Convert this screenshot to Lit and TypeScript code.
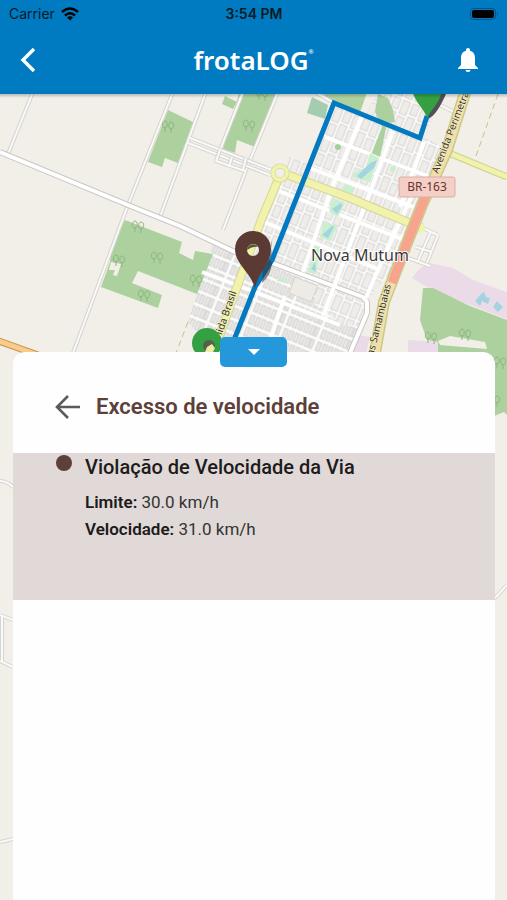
import { LitElement, html, svg, css } from "lit";
import { customElement } from "lit/decorators.js";

const woods = [
  "168,110 195,123 178,163 165,158 162,167 148,162",
  "240,90 279,90 255,147 237,140 235,153 223,149",
  "225,96 237,102 233,109 222,104",
  "125,220 182,242 179,253 193,260 195,251 213,254 197,294 138,271 132,283 162,295 158,308 101,287 110,262 111,247",
  "322,90 368,90 360,112 334,101 326,98",
  "378,94 388,98 393,110 395,122 387,123 380,157 372,153 382,127 375,112",
  "423,288 433,288 470,306 507,320 507,415 504,412 494,416 480,400 438,352 438,342 427,340 420,320",
];
const parks = [
  "370,153 379,158 370,182 352,177 354,173 366,167",
  "346,184 355,188 348,197 340,194",
  "333,198 345,203 338,217 329,212",
  "323,222 338,226 330,241 320,238",
  "315,245 320,247 316,274 308,272",
];
const estates = [
  "430,263 453,268 473,280 507,292 507,319 470,305 427,287 412,278 420,268",
  "408,340 439,342 439,353 408,353",
  "355,335 370,337 366,353 350,353",
];
const lanes = [
  "M33,92 L8,154",
  "M173,92 L128,205 L112,248 L73,353",
  "M206,92 L160,217",
  "M243,92 L220,150",
  "M278,92 L250,160 L223,230",
  "M190,138 L272,170",
  "M188,143 L270,175",
  "M220,150 L216,161 L245,171 M232,157 L229,167 M246,158 L243,170",
  "M423,228 L438,235 M416,247 L432,252 M408,258 L430,266 M431,231 L418,261 M438,235 L427,263",
  "M432,101 L456,113",
  "M308,88 L334,103",
  "M0,481 Q7,481 13,487",
  "M0,615 L13,620 M2,616 L2,661 M0,661 L13,667",
  "M0,842 L13,839",
  "M494,599 L507,585",
];
const mainRoad = "M0,152 L128,205 L180,226 L237,253 L272,263 L363,297 L367,302 L367,313 L350,353";
const avenues = [
  "M325,137 L370,154",
  "M380,158 L430,177",
  "M310,168 L413,207",
  "M279,191 L407,241",
  "M264,222 L380,270",
  "M202,272 L250,290 L340,325",
  "M362,116 L332,187 L303,272",
  "M393,131 L367,200 L323,316",
  "M413,193 L373,281 L366,298",
  "M424,142 L400,207",
  "M285,296 L270,340",
];
const trees: [number, number][] = [
  [168, 126], [249, 125], [262, 94], [157, 257], [119, 260], [144, 295], [138, 226], [196, 280],
  [431, 337], [465, 334], [500, 362], [494, 400],
];

@customElement("city-map")
class CityMap extends LitElement {
  static styles = css`
    :host { display: block; overflow: hidden; background: #f2efe9; }
    .map { display: block; width: 100%; height: 100%; }
    .wood { fill: #add19e; }
    .park { fill: #c8f0cf; }
    .water { fill: #a5d3e2; }
    .estate { fill: #ebdbe8; }
    .line { fill: none; stroke-linejoin: round; }
    .edge { stroke: #d6d4d1; stroke-width: 4; }
    .core { stroke: #fafaf9; stroke-width: 2; }
    .wide-edge { stroke: #cbc8c6; stroke-width: 6; }
    .wide-core { stroke: #ffffff; stroke-width: 4; }
    .yellow-edge { stroke: #d6d69a; stroke-width: 9; }
    .yellow-core { stroke: #f1f2ab; stroke-width: 7; }
    .slim-edge { stroke: #cfcf8c; stroke-width: 7; }
    .slim-core { stroke: #f1f2ab; stroke-width: 5; }
    .olive-edge { stroke: #c9c988; stroke-width: 12; }
    .sand-core { stroke: #f4dda8; stroke-width: 9; }
    .red-core { stroke: #f6a48e; stroke-width: 9; }
    .orange-edge { stroke: #c9974d; stroke-width: 7; }
    .orange-core { stroke: #fbcb8c; stroke-width: 5; }
    .track { stroke: #cbbf8b; stroke-width: 1; stroke-dasharray: 6 4; }
    .tree { fill: none; stroke: #8db581; stroke-width: 1; }
    .route { fill: none; stroke: #0379bf; stroke-width: 5; }
    .street { font: 10px "Noto Sans", sans-serif; fill: #333; stroke: #f4f0c0; stroke-width: 1; paint-order: stroke; }
    .city { font: 16px "Noto Sans", sans-serif; fill: #3a3a3a; stroke: #fff; stroke-width: 2; paint-order: stroke; text-anchor: middle; }
    .shield { fill: #f3cfc5; stroke: #dcaea2; }
    .ref { font: 12px "Noto Sans", sans-serif; fill: #6b3430; text-anchor: middle; }
  `;

  both(d: string, edge: string, core: string) {
    return svg`<path class="line ${edge}" d=${d} /><path class="line ${core}" d=${d} />`;
  }

  render() {
    return html`
      <svg class="map" viewBox="0 94 507 806" preserveAspectRatio="xMidYMin slice" role="img" aria-label="Mapa de Nova Mutum">
        <defs>
          <pattern id="blocks" width="20" height="32" patternUnits="userSpaceOnUse" patternTransform="translate(336 106) rotate(22)">
            <rect width="20" height="32" fill="#fbfbfa" />
            <g fill="#efedea" stroke="#cfcdcb" stroke-width="0.8">
              <rect x="1" y="1" width="7" height="14" /><rect x="11" y="1" width="7" height="11" />
              <rect x="1" y="18" width="7" height="12" /><rect x="11" y="15" width="7" height="15" />
            </g>
          </pattern>
          <pattern id="lots" width="36" height="13" patternUnits="userSpaceOnUse" patternTransform="translate(270 264) rotate(22)">
            <rect width="36" height="13" fill="#fbfbfa" />
            <g fill="#e9e7e5" stroke="#cbc9c7" stroke-width="0.8">
              <rect x="2" y="2" width="4" height="9" /><rect x="8" y="2" width="4" height="9" />
              <rect x="14" y="2" width="4" height="9" /><rect x="20" y="2" width="4" height="9" />
              <rect x="26" y="2" width="4" height="9" /><rect x="31" y="2" width="3" height="9" />
            </g>
          </pattern>
          <linearGradient id="shade" x1="0" y1="0" x2="0" y2="1">
            <stop offset="0" stop-color="#000" stop-opacity="0.22" />
            <stop offset="1" stop-color="#000" stop-opacity="0" />
          </linearGradient>
        </defs>
        <rect y="94" width="507" height="806" fill="#f2efe9" />
        ${estates.map((p) => svg`<polygon class="estate" points=${p} />`)}
        <polygon fill="url(#blocks)" points="334,103 366,115 376,94 437,94 432,118 426,138 441,146 422,205 392,272 380,284 367,302 367,313 352,348 320,318 272,263 250,255 268,215 283,175 289,156 314,166" />
        <polygon fill="url(#lots)" points="213,243 250,258 272,263 318,282 314,305 345,326 362,325 350,353 215,353 188,322" />
        ${woods.map((p) => svg`<polygon class="wood" points=${p} />`)}
        <polygon points="312,97 328,105 325,119 307,113" fill="#a4cdb0" />
        <polygon points="438,341 450,336 485,342 487,349 440,345" fill="#f2efe9" />
        <path d="M111,262 L121,264 L117,276 L113,275 L115,270 L109,270 Z" fill="#f2efe9" />
        <circle cx="338" cy="147" r="3" fill="#a3cf9b" />
        <circle cx="393" cy="169" r="3" fill="#c8f0cf" />
        ${lanes.map((d) => this.both(d, "edge", "core"))}
        ${this.both(mainRoad, "wide-edge", "wide-core")}
        ${avenues.map((d) => svg`<path class="line wide-core" d=${d} />`)}
        ${parks.map((p) => svg`<polygon class="park" points=${p} />`)}
        <path class="water" d="M377,160 L370,163 L357,176 L361,179 L374,168 Z M341,203 L332,209 L337,214 L342,206 Z M332,226 L322,235 L328,238 L334,227 Z M315,262 L311,269 L316,272 Z" />
        <path class="water" d="M475,301 L481,294 L484,292 L486,297 L490,298 L488,304 L482,301 L480,306 Z M493,307 L497,301 L503,307 L498,312 Z" />
        <polygon points="295,277 318,286 311,302 289,293" fill="#eeebe7" stroke="#d7d3cf" />
        <polygon points="279,277 287,279 285,283 277,281" fill="#c9ecd3" />
        <path class="line track" d="M498,94 L476,156" />
        <path class="line track" d="M188,322 L176,353" />
        ${this.both("M288,175 L350,198 L383,212 L422,228", "yellow-edge", "yellow-core")}
        ${this.both("M278,180 L262,218 L236,290 L213,353", "yellow-edge", "yellow-core")}
        ${this.both("M444,151 L507,177", "slim-edge", "slim-core")}
        <circle cx="280" cy="173" r="7" fill="#f2efe9" stroke="#cfcf8c" stroke-width="5" />
        <circle cx="280" cy="173" r="7" fill="none" stroke="#f1f2ab" stroke-width="4" />
        <circle cx="420" cy="228" r="5" fill="#f1f2ab" />
        ${this.both("M466,90 L447,150 L422,205 L405,248 L384,302 L375,353", "olive-edge", "sand-core")}
        <path class="line red-core" d="M433,178 L422,205 L405,248 L392,283" />
        ${this.both("M-4,340 L38,355", "orange-edge", "orange-core")}
        ${trees.map(
          ([x, y]) => svg`<path class="tree" transform="translate(${x} ${y})"
            d="M-3,6 V1 M-3,2 C-7,2 -6,-5 -3,-5 C0,-5 0,2 -3,2 M3,7 V2 M3,3 C0,3 0,-4 3,-4 C7,-4 6,3 3,3" />`
        )}
        <text class="street" transform="translate(438 174) rotate(-69)">Avenida Perimetra</text>
        <text class="street" transform="translate(215 355) rotate(-71)">Avenida Brasil</text>
        <text class="street" text-anchor="end" transform="translate(391 285) rotate(-76)">Avenida das Samambaias</text>
        <text class="city" x="360" y="261">Nova Mutum</text>
        <rect class="shield" x="399" y="177" width="56" height="20" rx="2" />
        <text class="ref" x="427" y="191">BR-163</text>

        <path d="M271,240 Q275,254 256,286 L264,275 L272,263 Z" fill="#34393f" opacity="0.6" />
        <path d="M427,119 Q436,117 446,94 L434,94 Z" fill="#4e5257" />
        <path class="route" d="M427,116 L420,138 L334,103 L272,260 L255,287 L232,345" />
        <path d="M262,283 Q271,275 272,263 L264,252 Z" fill="#34393f" opacity="0.6" />
        <path d="M427,118 C424,108 415,103 412,90 H442 C440,103 432,108 427,118 Z" fill="#35a042" />
        <path fill="#5b3a34" fill-rule="evenodd"
          d="M255,288 C251,273 235,264 235,249 A18,18 0 0 1 271,249 C271,264 258,273 255,288 Z M253,244 a6,6 0 1 0 0.1,0 Z" />
        <path d="M247,250 A6,6 0 0 1 258,247 Q253,246 247,250 Z" fill="#55573e" />
        <circle cx="207" cy="343" r="15" fill="#35a042" />
        <circle cx="209" cy="346" r="6" fill="#55604c" />
        <path d="M205,352 L207,347 L212,344 L215,348 L213,352 Z" fill="#eeeaa5" />
        <rect y="94" width="507" height="4" fill="url(#shade)" />
      </svg>
    `;
  }
}

@customElement("app-root")
class AppRoot extends LitElement {
  static styles = css`
    :host { display: flex; flex-direction: column; min-height: 100vh; font-family: Roboto, sans-serif; color: #1d1b1b; }
    * { box-sizing: border-box; }
    button { border: 0; padding: 0; background: none; color: inherit; font: inherit; cursor: pointer; display: grid; place-items: center; }
    svg { display: block; }
    .top { background: #007bc1; }
    .status { display: grid; grid-template-columns: 1fr auto 1fr; align-items: center; height: 28px; padding: 0 8px 0 9px; color: #0a1a26; font: 14px/16px Inter, sans-serif; }
    .carrier { display: flex; align-items: center; gap: 6px; }
    .time { font-weight: 600; }
    .battery { justify-self: end; }
    .nav { display: grid; grid-template-columns: 1fr auto 1fr; align-items: center; height: 66px; padding: 0 8px 2px; color: #fff; }
    .icon { width: 40px; height: 40px; }
    .bell { justify-self: end; width: 63px; height: 40px; }
    .brand { display: flex; align-items: flex-start; margin: 0; font: 600 26px/32px "Noto Sans", sans-serif; }
    .mark { font-size: 6px; line-height: 16px; }
    .content { position: relative; flex: 1; display: flex; flex-direction: column; padding: 258px 12px 0 13px; }
    .backdrop { position: absolute; inset: 0; }
    .sheet { position: relative; flex: 1; background: #fefefe; border-radius: 12px 12px 0 0; }
    .toggle { position: absolute; top: -15px; left: 50%; width: 67px; height: 30px; margin-left: -34px; border-radius: 5px; background: #2598dc; }
    .heading { display: flex; align-items: center; gap: 14px; height: 101px; padding: 8px 40px 0; }
    .back { width: 29px; height: 32px; color: #5c5a5a; }
    .title { margin: 0; font-size: 22px; line-height: 28px; font-weight: 600; color: #5d4039; }
    .event { display: flex; gap: 13px; min-height: 147px; padding: 2px 43px; background: #e0d9d7; }
    .dot { flex: none; width: 16px; height: 16px; border-radius: 50%; background: #5d4039; }
    .name { margin: 0 0 10px; font-size: 20px; line-height: 24px; font-weight: 500; }
    .fact { margin: 0; font-size: 17px; line-height: 27px; color: #333; }
    .label { font-weight: 600; color: #1d1b1b; }
  `;

  render() {
    return html`
      <header class="top">
        <div class="status">
          <span class="carrier">Carrier
            <svg width="18" height="14" viewBox="0 0 18 14" fill="none" stroke="#000" stroke-width="2.6">
              <path d="M1,5 Q9,-2 17,5" /><path d="M4,8.500 Q9,4 14,8.500" /><path d="M9,13.500 L6,10.500 Q9,8 12,10.500 Z" fill="#000" stroke="none" />
            </svg>
          </span>
          <span class="time">3:54 PM</span>
          <svg class="battery" width="29" height="12" viewBox="0 0 29 12">
            <rect x="0.5" y="0.5" width="25" height="11" rx="3" fill="none" stroke="#045487" />
            <rect x="2" y="2" width="22" height="8" rx="2" fill="#000" />
            <path d="M27,4 Q29,6 27,8 Z" fill="#045487" />
          </svg>
        </div>
        <nav class="nav">
          <button class="icon" aria-label="Voltar">
            <svg width="16" height="26" viewBox="0 0 16 26" fill="none" stroke="#fff" stroke-width="3.4"><path d="M14,2 L3,13 L14,24" /></svg>
          </button>
          <h1 class="brand">frotaLOG<span class="mark">®</span></h1>
          <button class="bell" aria-label="Notificações">
            <svg width="20" height="24" viewBox="0 0 20 24" fill="#fff">
              <path d="M10,0 A2,2 0 0 1 12,2 V2.800 C15.500,3.800 17,6.800 17,10 V17 L20,20 V21 H0 V20 L3,17 V10 C3,6.800 4.500,3.800 8,2.800 V2 A2,2 0 0 1 10,0 Z M7.500,22 H12.500 A2.500,2 0 0 1 7.500,22 Z" />
            </svg>
          </button>
        </nav>
      </header>
      <main class="content">
        <city-map class="backdrop"></city-map>
        <section class="sheet">
          <button class="toggle" aria-label="Recolher painel">
            <svg width="12" height="6" viewBox="0 0 12 6" fill="#fff"><path d="M0,0 H12 L6,6 Z" /></svg>
          </button>
          <div class="heading">
            <button class="back" aria-label="Voltar para a lista">
              <svg width="26" height="24" viewBox="0 0 26 24" fill="none" stroke="currentColor" stroke-width="2.600"><path d="M25,12 H3 M13,1 L2,12 L13,23" /></svg>
            </button>
            <h2 class="title">Excesso de velocidade</h2>
          </div>
          <article class="event">
            <span class="dot"></span>
            <div>
              <h3 class="name">Violação de Velocidade da Via</h3>
              <p class="fact"><span class="label">Limite:</span> 30.0 km/h</p>
              <p class="fact"><span class="label">Velocidade:</span> 31.0 km/h</p>
            </div>
          </article>
        </section>
      </main>
    `;
  }
}
